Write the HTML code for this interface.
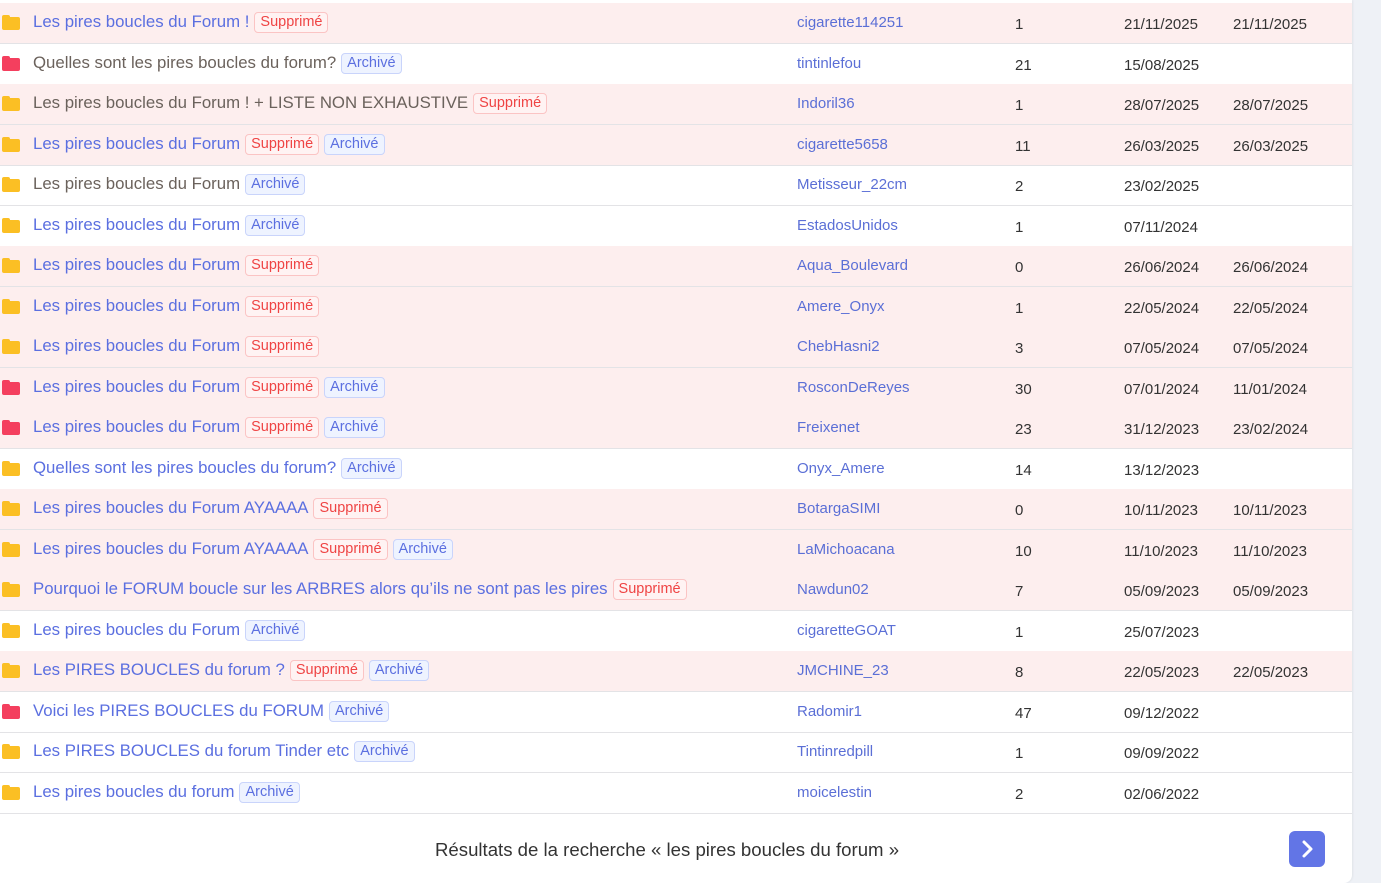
<!DOCTYPE html>
<html><head><meta charset="utf-8"><style>
body{margin:0;width:1381px;height:883px;background:#eef1f6;font-family:"Liberation Sans",sans-serif;overflow:hidden;position:relative}
.card{position:absolute;left:0;top:0;width:1352px;height:883px;background:#fff;border-radius:0 0 8px 0;box-shadow:1px 0 2px rgba(0,0,0,.06)}
.row{position:absolute;left:0;width:1352px;height:40px;border-bottom:1px solid #e3e3e6}
.pink{background:#fdeeee}
.ic{position:absolute;left:2px;top:14px;width:18px;height:13px;border-radius:2px}
.ic:before{content:"";position:absolute;left:0;top:-2px;width:8px;height:4px;border-radius:2px 2px 0 0;background:inherit}
.y{background:#fbbf24}.r{background:#f43f5e}
.t{position:absolute;left:33px;top:9px;font-size:16.8px;color:#5b6fe0;white-space:nowrap}
.g{color:#6b625c}
.b{display:inline-block;font-size:14.5px;line-height:19px;padding:0 5px;border-radius:4px;margin-left:5px;vertical-align:1px}
.s{color:#ef4444;border:1px solid #fbc4c4;background:#fff3f3}
.a{color:#5b6fe0;border:1px solid #c9d4fb;background:#eef3ff}
.au{position:absolute;left:797px;top:11px;font-size:15px;color:#5b6fd6}
.n{position:absolute;left:1015px;top:13px;font-size:15px;color:#333}
.d1{position:absolute;left:1124px;top:13px;font-size:15px;color:#333}
.d2{position:absolute;left:1233px;top:13px;font-size:15px;color:#333}
.foot{position:absolute;left:435px;top:839px;font-size:18.6px;color:#333}
.btn{position:absolute;left:1289px;top:831px;width:36px;height:36px;border-radius:6px;background:#6275e6}
</style></head><body><div class="card">
<div class="row pink" style="top:3px"><div class="ic y"></div><div class="t">Les pires boucles du Forum !<span class="b s">Supprimé</span></div><div class="au">cigarette114251</div><div class="n">1</div><div class="d1">21/11/2025</div><div class="d2">21/11/2025</div></div>
<div class="row" style="top:44px"><div class="ic r"></div><div class="t g">Quelles sont les pires boucles du forum?<span class="b a">Archivé</span></div><div class="au">tintinlefou</div><div class="n">21</div><div class="d1">15/08/2025</div></div>
<div class="row pink" style="top:84px"><div class="ic y"></div><div class="t g">Les pires boucles du Forum ! + LISTE NON EXHAUSTIVE<span class="b s">Supprimé</span></div><div class="au">Indoril36</div><div class="n">1</div><div class="d1">28/07/2025</div><div class="d2">28/07/2025</div></div>
<div class="row pink" style="top:125px"><div class="ic y"></div><div class="t">Les pires boucles du Forum<span class="b s">Supprimé</span><span class="b a">Archivé</span></div><div class="au">cigarette5658</div><div class="n">11</div><div class="d1">26/03/2025</div><div class="d2">26/03/2025</div></div>
<div class="row" style="top:165px"><div class="ic y"></div><div class="t g">Les pires boucles du Forum<span class="b a">Archivé</span></div><div class="au">Metisseur_22cm</div><div class="n">2</div><div class="d1">23/02/2025</div></div>
<div class="row" style="top:206px"><div class="ic y"></div><div class="t">Les pires boucles du Forum<span class="b a">Archivé</span></div><div class="au">EstadosUnidos</div><div class="n">1</div><div class="d1">07/11/2024</div></div>
<div class="row pink" style="top:246px"><div class="ic y"></div><div class="t">Les pires boucles du Forum<span class="b s">Supprimé</span></div><div class="au">Aqua_Boulevard</div><div class="n">0</div><div class="d1">26/06/2024</div><div class="d2">26/06/2024</div></div>
<div class="row pink" style="top:287px"><div class="ic y"></div><div class="t">Les pires boucles du Forum<span class="b s">Supprimé</span></div><div class="au">Amere_Onyx</div><div class="n">1</div><div class="d1">22/05/2024</div><div class="d2">22/05/2024</div></div>
<div class="row pink" style="top:327px"><div class="ic y"></div><div class="t">Les pires boucles du Forum<span class="b s">Supprimé</span></div><div class="au">ChebHasni2</div><div class="n">3</div><div class="d1">07/05/2024</div><div class="d2">07/05/2024</div></div>
<div class="row pink" style="top:368px"><div class="ic r"></div><div class="t">Les pires boucles du Forum<span class="b s">Supprimé</span><span class="b a">Archivé</span></div><div class="au">RosconDeReyes</div><div class="n">30</div><div class="d1">07/01/2024</div><div class="d2">11/01/2024</div></div>
<div class="row pink" style="top:408px"><div class="ic r"></div><div class="t">Les pires boucles du Forum<span class="b s">Supprimé</span><span class="b a">Archivé</span></div><div class="au">Freixenet</div><div class="n">23</div><div class="d1">31/12/2023</div><div class="d2">23/02/2024</div></div>
<div class="row" style="top:449px"><div class="ic y"></div><div class="t">Quelles sont les pires boucles du forum?<span class="b a">Archivé</span></div><div class="au">Onyx_Amere</div><div class="n">14</div><div class="d1">13/12/2023</div></div>
<div class="row pink" style="top:489px"><div class="ic y"></div><div class="t">Les pires boucles du Forum AYAAAA<span class="b s">Supprimé</span></div><div class="au">BotargaSIMI</div><div class="n">0</div><div class="d1">10/11/2023</div><div class="d2">10/11/2023</div></div>
<div class="row pink" style="top:530px"><div class="ic y"></div><div class="t">Les pires boucles du Forum AYAAAA<span class="b s">Supprimé</span><span class="b a">Archivé</span></div><div class="au">LaMichoacana</div><div class="n">10</div><div class="d1">11/10/2023</div><div class="d2">11/10/2023</div></div>
<div class="row pink" style="top:570px"><div class="ic y"></div><div class="t">Pourquoi le FORUM boucle sur les ARBRES alors qu’ils ne sont pas les pires<span class="b s">Supprimé</span></div><div class="au">Nawdun02</div><div class="n">7</div><div class="d1">05/09/2023</div><div class="d2">05/09/2023</div></div>
<div class="row" style="top:611px"><div class="ic y"></div><div class="t">Les pires boucles du Forum<span class="b a">Archivé</span></div><div class="au">cigaretteGOAT</div><div class="n">1</div><div class="d1">25/07/2023</div></div>
<div class="row pink" style="top:651px"><div class="ic y"></div><div class="t">Les PIRES BOUCLES du forum ?<span class="b s">Supprimé</span><span class="b a">Archivé</span></div><div class="au">JMCHINE_23</div><div class="n">8</div><div class="d1">22/05/2023</div><div class="d2">22/05/2023</div></div>
<div class="row" style="top:692px"><div class="ic r"></div><div class="t">Voici les PIRES BOUCLES du FORUM<span class="b a">Archivé</span></div><div class="au">Radomir1</div><div class="n">47</div><div class="d1">09/12/2022</div></div>
<div class="row" style="top:732px"><div class="ic y"></div><div class="t">Les PIRES BOUCLES du forum Tinder etc<span class="b a">Archivé</span></div><div class="au">Tintinredpill</div><div class="n">1</div><div class="d1">09/09/2022</div></div>
<div class="row" style="top:773px"><div class="ic y"></div><div class="t">Les pires boucles du forum<span class="b a">Archivé</span></div><div class="au">moicelestin</div><div class="n">2</div><div class="d1">02/06/2022</div></div>
<div class="foot">Résultats de la recherche « les pires boucles du forum »</div>
<div class="btn"><svg width="36" height="36" viewBox="0 0 36 36"><path d="M15 11l7 7-7 7" fill="none" stroke="#fff" stroke-width="3" stroke-linecap="round" stroke-linejoin="round"/></svg></div>
</div></body></html>
